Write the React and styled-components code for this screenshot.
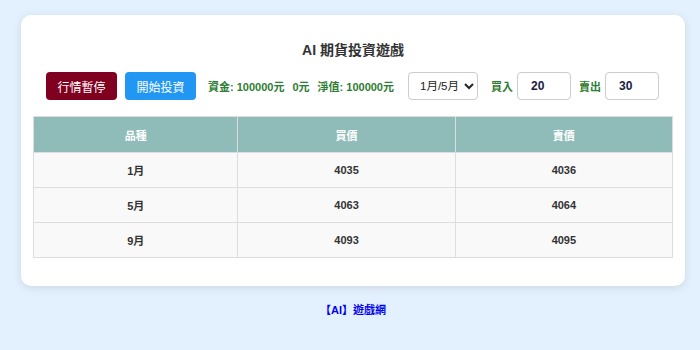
import styled, { createGlobalStyle } from "styled-components";
import { useState } from "react";

const GlobalStyle = createGlobalStyle`
  body {
    margin: 0;
    background: #e3f0fd;
    font-family: "Liberation Sans", Arial, "Noto Sans CJK TC", sans-serif;
  }
`;

const rows = [
  { name: "1月", buy: 4035, sell: 4036 },
  { name: "5月", buy: 4063, sell: 4064 },
  { name: "9月", buy: 4093, sell: 4095 },
];

const App = () => {
  const [buyQty, setBuyQty] = useState("20");
  const [sellQty, setSellQty] = useState("30");
  const [pair, setPair] = useState("1-5");

  return (
    <Page>
      <GlobalStyle />
      <Card>
        <Title>AI 期貨投資遊戲</Title>
        <Controls>
          <Button $color="#800020">行情暫停</Button>
          <Button $color="#2196f3">開始投資</Button>
          <Stats>
            資金: 100000元<Gap />0元<Gap />淨值: 100000元
          </Stats>
          <Select value={pair} onChange={(e) => setPair(e.target.value)}>
            <option value="1-5">1月/5月</option>
            <option value="5-9">5月/9月</option>
            <option value="1-9">1月/9月</option>
          </Select>
          <Label $gap={13}>買入</Label>
          <QtyInput value={buyQty} onChange={(e) => setBuyQty(e.target.value)} />
          <Label $gap={8}>賣出</Label>
          <QtyInput value={sellQty} onChange={(e) => setSellQty(e.target.value)} />
        </Controls>
        <Table>
          <thead>
            <tr>
              <Th style={{ width: "32%" }}>品種</Th>
              <Th>買價</Th>
              <Th>賣價</Th>
            </tr>
          </thead>
          <tbody>
            {rows.map((r) => (
              <tr key={r.name}>
                <Td>{r.name}</Td>
                <Td>{r.buy}</Td>
                <Td>{r.sell}</Td>
              </tr>
            ))}
          </tbody>
        </Table>
      </Card>
      <Footer>
        <FooterLink href="#">【AI】遊戲網</FooterLink>
      </Footer>
    </Page>
  );
};

const Page = styled.div`
  padding: 15px 15px 0 21px;
`;

const Card = styled.div`
  background: #fff;
  border-radius: 10px;
  box-shadow: 0 2px 10px rgba(0, 0, 0, 0.1);
  padding: 26px 12px 28px;
`;

const Title = styled.h2`
  margin: 0;
  text-align: center;
  font-size: 14px;
  font-weight: bold;
  color: #333;
  line-height: 18px;
`;

const Controls = styled.div`
  display: flex;
  align-items: center;
  margin: 13px 0 16px 13px;
`;

const Button = styled.button`
  height: 28px;
  width: 71px;
  margin-right: 8px;
  border: none;
  border-radius: 4px;
  background: ${({ $color }) => $color};
  color: #fff;
  font-family: inherit;
  font-size: 12px;
  cursor: pointer;
`;

const Stats = styled.span`
  margin-left: 4px;
  color: #2e7d32;
  font-size: 11px;
  font-weight: bold;
  white-space: pre;
`;

const Gap = styled.span`
  display: inline-block;
  width: 8px;
`;

const Select = styled.select`
  margin-left: 14px;
  width: 70px;
  height: 28px;
  border: 1px solid #ccc;
  border-radius: 4px;
  background: #fff;
  color: #222;
  font-family: inherit;
  font-size: 11.5px;
  padding: 0 2px 0 7px;
`;

const Label = styled.span`
  margin: 0 4px 0 ${({ $gap }) => $gap}px;
  color: #2e7d32;
  font-size: 11px;
  font-weight: bold;
`;

const QtyInput = styled.input`
  width: 54px;
  height: 28px;
  box-sizing: border-box;
  border: 1px solid #ccc;
  border-radius: 4px;
  padding: 0 0 0 13px;
  font-family: inherit;
  font-size: 12px;
  font-weight: bold;
  color: #1a1a40;
`;

const Table = styled.table`
  width: 100%;
  border-collapse: collapse;
  font-size: 11px;
`;

const Th = styled.th`
  background: #8fbcb8;
  color: #fff;
  height: 35px;
  padding: 0;
  border: 1px solid #ddd;
  font-weight: bold;
`;

const Td = styled.td`
  background: #f9f9f9;
  color: #333;
  height: 34px;
  padding: 0;
  border: 1px solid #ddd;
  text-align: center;
  font-weight: bold;
`;

const Footer = styled.div`
  text-align: center;
  margin-top: 15px;
  font-size: 11px;
  font-weight: bold;
`;

const FooterLink = styled.a`
  color: #0000ee;
  text-decoration: none;
`;

export default App;
